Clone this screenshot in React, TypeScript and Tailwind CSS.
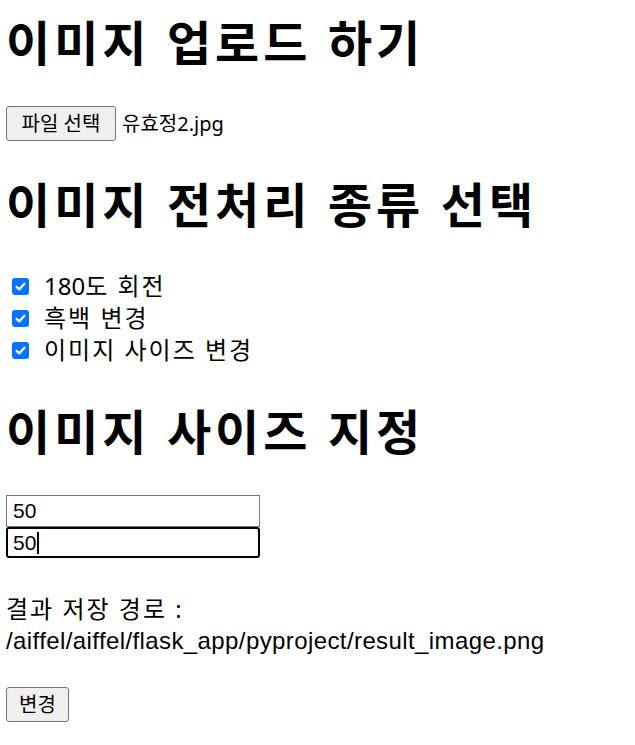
import React from "react";

const Check = () => (
  <span className="ml-[6px] mr-[15px] flex h-[17px] w-[17px] shrink-0 items-center justify-center rounded-[3px] bg-[#0075ff]">
    <svg width="13" height="13" viewBox="0 0 13 13">
      <path d="M2.5 6.8 L5.2 9.4 L10.5 3.6" fill="none" stroke="white" strokeWidth="2.2" strokeLinecap="round" strokeLinejoin="round" />
    </svg>
  </span>
);

const labels: React.ReactNode[] = [
  <>
    <span className="tracking-normal">180</span>도 회전
  </>,
  <>흑백 변경</>,
  <>이미지 사이즈 변경</>,
];

export default function App() {
  return (
    <div
      className="min-h-[745px] bg-white px-[6px] pt-[11px] text-black"
      style={{ fontFamily: '"Noto Sans", "Noto Sans CJK KR", sans-serif' }}
    >
      <h1 className="text-[48px] font-bold leading-[64px] tracking-[4px]">이미지 업로드 하기</h1>

      <div className="mt-[31px] flex h-[35px] items-center">
        <button className="flex h-[35px] w-[110px] items-center justify-center rounded-[3px] border border-[#767676] bg-[#efefef] text-[20px] leading-none">
          파일 선택
        </button>
        <span className="ml-[6px] text-[20px]">유효정2.jpg</span>
      </div>

      <h1 className="mt-[32px] text-[48px] font-bold leading-[64px] tracking-[4px]">이미지 전처리 종류 선택</h1>

      <div className="mt-[33px] flex flex-col text-[24px]">
        {labels.map((t, i) => (
          <div key={i} className="flex h-[32px] items-center">
            <Check />
            <span className="leading-[32px] tracking-[2px]">{t}</span>
          </div>
        ))}
      </div>

      <h1 className="mt-[34px] text-[48px] font-bold leading-[64px] tracking-[4px]">이미지 사이즈 지정</h1>

      <div className="mt-[31px] flex flex-col" style={{ fontFamily: '"Liberation Sans", Arial, sans-serif' }}>
        <div className="flex h-[32px] w-[254px] items-center border border-[#767676] px-[6px] text-[21px]">50</div>
        <div className="flex h-[31px] w-[254px] items-center rounded-[3px] border-2 border-black px-[5px] text-[21px]">
          50<span className="ml-[1px] inline-block h-[22px] w-[2px] bg-black" />
        </div>
      </div>

      <div className="mt-[35px] text-[24px] leading-[32px]">
        <div className="tracking-[2px]">결과 저장 경로 :</div>
        <div className="tracking-[0.4px]" style={{ fontFamily: '"Liberation Sans", Arial, sans-serif' }}>
          /aiffel/aiffel/flask_app/pyproject/result_image.png
        </div>
      </div>

      <button className="mt-[30px] flex h-[35px] w-[63px] items-center justify-center rounded-[3px] border border-[#767676] bg-[#efefef] text-[20px] leading-none">
        변경
      </button>
    </div>
  );
}
